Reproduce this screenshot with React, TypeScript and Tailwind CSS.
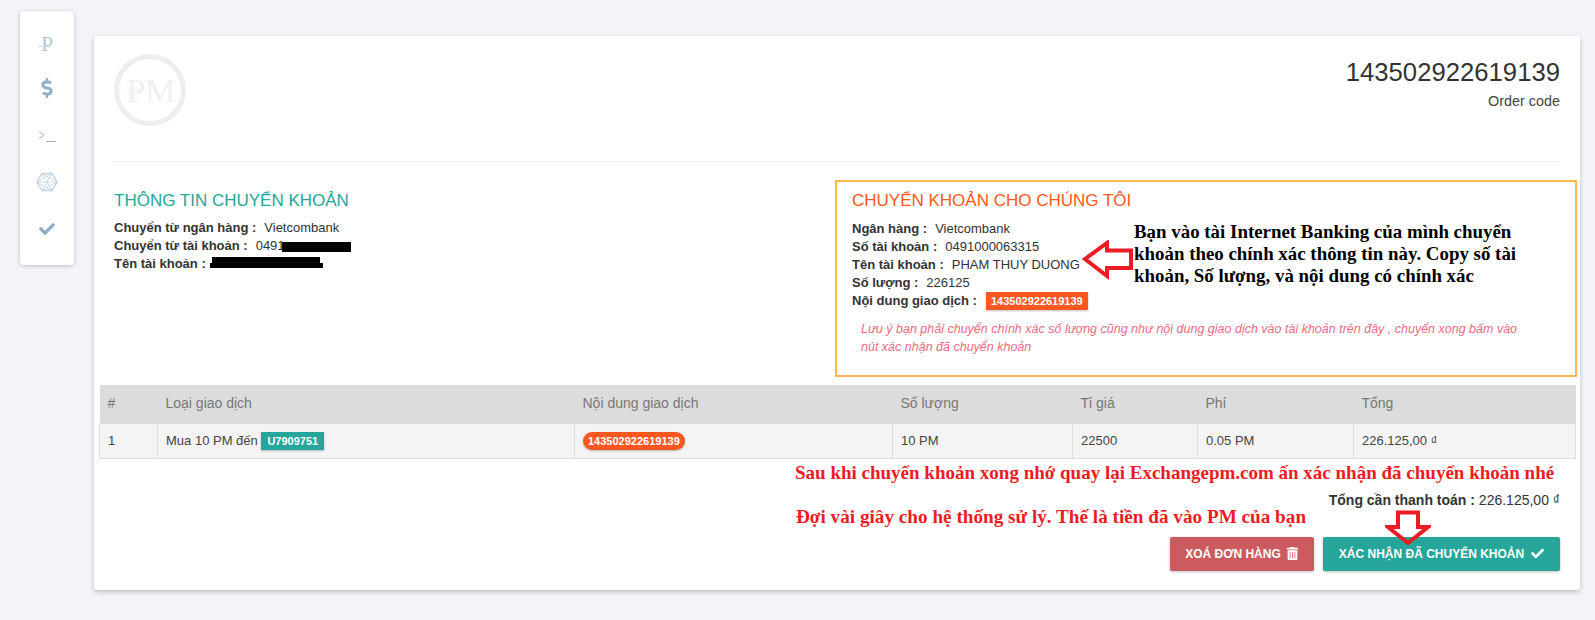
import React from "react";
import { FaCheck, FaDollarSign, FaTrashAlt } from "react-icons/fa";

const sans = { fontFamily: '"Liberation Sans", Arial, sans-serif' };

// table columns: [label, width]
const columns: [string, number][] = [
  ["#", 58],
  ["Loại giao dịch", 417],
  ["Nội dung giao dịch", 318],
  ["Số lượng", 180],
  ["Tỉ giá", 125],
  ["Phí", 156],
  ["Tổng", 222],
];

const Terminal = () => (
  <svg width="18" height="12" viewBox="0 0 18 12" fill="none" stroke="#9db7cb" strokeWidth="1">
    <path d="M1 1.5 L6 5 L1 8.5" />
    <path d="M8 11.5 H18" />
  </svg>
);

const Hexagon = () => (
  <svg width="22" height="20" viewBox="0 0 22 20" fill="none" stroke="#c3d2de" strokeWidth="0.8">
    <path d="M6 1.5 H16 L21 10 L16 18.5 H6 L1 10 Z" strokeWidth="1.4" />
    <path d="M6 1.5 L16 18.5 M16 1.5 L6 18.5 M1 10 H21 M6 1.5 L21 10 M16 1.5 L1 10 M6 18.5 L21 10 M16 18.5 L1 10" />
  </svg>
);

const Sidebar = () => (
  <div className="mt-[11px] flex h-[254px] w-[54px] shrink-0 flex-col items-center rounded-[4px] bg-white pt-[10px] shadow-[0_1px_4px_rgba(0,0,0,0.22)]">
    <div className="relative flex h-[46px] items-center justify-center">
      <span className="text-[22px] leading-none text-[#b4c8d8]" style={{ fontFamily: '"Liberation Serif", serif' }}>
        P
      </span>
      <span className="absolute left-[-3px] top-[25px] h-px w-[14px] bg-[#d5e0e9]" />
    </div>
    <div className="mt-[-2px] flex h-[46px] items-center justify-center">
      <FaDollarSign className="text-[20px] text-[#94b0c6]" />
    </div>
    <div className="mt-[2px] flex h-[46px] items-center justify-center">
      <Terminal />
    </div>
    <div className="flex h-[46px] items-center justify-center">
      <Hexagon />
    </div>
    <div className="mt-[1px] flex h-[46px] items-center justify-center">
      <FaCheck className="text-[16px] text-[#8fabc1]" />
    </div>
  </div>
);

const Logo = () => (
  <svg width="72" height="72" viewBox="0 0 72 72">
    <circle cx="36" cy="36" r="33.5" fill="none" stroke="#eeeeee" strokeWidth="5" />
    <text x="37" y="48" textAnchor="middle" fontSize="34" fill="#f0f0f0" fontFamily="Liberation Serif, serif">
      PM
    </text>
    <path d="M13 36 H28" stroke="#eeeeee" strokeWidth="1" />
  </svg>
);

const Row = ({ label, children }: { label: string; children?: React.ReactNode }) => (
  <div>
    <b className="font-bold">{label} :</b>
    <span className="ml-[8px]">{children}</span>
  </div>
);

export default function App() {
  return (
    <div className="relative flex h-[620px] w-[1595px] overflow-hidden bg-[#f3f4f8] pl-5 text-[#333]" style={sans}>
      <Sidebar />

      <div className="ml-5 mt-9 flex h-[554px] w-[1486px] flex-col rounded-[3px] bg-white px-5 pt-[18px] shadow-[0_2px_5px_rgba(0,0,0,0.22)]">
        <div className="flex h-[108px] justify-between border-b border-[#eeeeee]">
          <Logo />
          <div className="text-right">
            <div className="text-[25.7px] leading-[36px] text-[#333]">143502922619139</div>
            <div className="mt-[2px] text-[14.4px] leading-[18px] text-[#444]">Order code</div>
          </div>
        </div>

        <div className="mt-[18px] flex">
          <div className="flex-1 pt-[9px]">
            <h3 className="text-[17px] leading-[24px] text-[#26a69a]">THÔNG TIN CHUYỂN KHOẢN</h3>
            <div className="mt-[6px] text-[13px] leading-[18px]">
              <Row label="Chuyển từ ngân hàng">Vietcombank</Row>
              <Row label="Chuyển từ tài khoản">0491</Row>
              <Row label="Tên tài khoản" />
            </div>
          </div>

          <div className="mr-[-17px] h-[197px] w-[742px] border-2 border-[#ffb74d] pl-[15px] pt-[7px]">
            <h3 className="text-[17px] leading-[24px] text-[#ff5722]">CHUYỂN KHOẢN CHO CHÚNG TÔI</h3>
            <div className="mt-[7px] text-[13px] leading-[18px]">
              <Row label="Ngân hàng">Vietcombank</Row>
              <Row label="Số tài khoản">0491000063315</Row>
              <Row label="Tên tài khoản">PHAM THUY DUONG</Row>
              <Row label="Số lượng">226125</Row>
              <div>
                <b className="font-bold">Nội dung giao dịch :</b>
                <span className="ml-[9px] inline-block h-[18px] bg-[#ff5722] px-[5px] text-[11px] font-bold leading-[18px] text-white shadow-[0_1px_2px_rgba(0,0,0,0.25)]">
                  143502922619139
                </span>
              </div>
            </div>
            <p className="mt-[10px] w-[674px] pl-[9px] text-[12.5px] italic leading-[18px] text-[#ee6a82]">
              Lưu ý bạn phải chuyển chính xác số lượng cũng như nội dung giao dịch vào tài khoản trên đây , chuyển xong bấm vào nút xác nhận đã chuyển khoản
            </p>
          </div>
        </div>

        <table className="mx-[-15px] mt-2 w-[1476px] table-fixed border-collapse text-[13px]">
          <colgroup>
            {columns.map(([label, width]) => (
              <col key={label} style={{ width }} />
            ))}
          </colgroup>
          <thead>
            <tr className="h-[38px] bg-[#dcdcdc] text-[14px] text-[#777]">
              {columns.map(([label]) => (
                <th key={label} className="px-[8px] text-left font-normal">
                  {label}
                </th>
              ))}
            </tr>
          </thead>
          <tbody>
            <tr className="h-[35px] bg-[#f4f4f4] text-[#444]">
              <td className="border border-[#dddddd] px-[8px]">1</td>
              <td className="border border-[#dddddd] px-[8px]">
                Mua 10 PM đến{" "}
                <span className="inline-block h-[18px] bg-[#26a69a] px-[6px] align-middle text-[11px] font-bold leading-[18px] text-white shadow-[0_1px_2px_rgba(0,0,0,0.25)]">
                  U7909751
                </span>
              </td>
              <td className="border border-[#dddddd] px-[8px]">
                <span className="inline-block h-[18px] rounded-full bg-[#ff5722] px-[5px] align-middle text-[11px] font-bold leading-[18px] text-white shadow-[0_1px_2px_rgba(0,0,0,0.25)]">
                  143502922619139
                </span>
              </td>
              <td className="border border-[#dddddd] px-[8px]">10 PM</td>
              <td className="border border-[#dddddd] px-[8px]">22500</td>
              <td className="border border-[#dddddd] px-[8px]">0.05 PM</td>
              <td className="border border-[#dddddd] px-[8px]">226.125,00 ₫</td>
            </tr>
          </tbody>
        </table>

        <div className="mt-[32px] text-right text-[14px] leading-[18px]">
          <b className="font-bold">Tổng cần thanh toán :</b> 226.125,00 ₫
        </div>

        <div className="mt-[28px] flex justify-end gap-[9px]">
          <button className="flex h-[34px] w-[144px] items-center justify-center gap-[5px] rounded-[2px] bg-[#cc5b5f] text-[12px] font-bold text-white shadow-[0_1px_3px_rgba(0,0,0,0.25)]">
            XOÁ ĐƠN HÀNG <FaTrashAlt className="text-[13px]" />
          </button>
          <button className="flex h-[34px] w-[237px] items-center justify-center gap-[7px] rounded-[2px] bg-[#26a69a] text-[12px] font-bold text-white shadow-[0_1px_3px_rgba(0,0,0,0.25)]">
            XÁC NHẬN ĐÃ CHUYỂN KHOẢN <FaCheck className="text-[13px]" />
          </button>
        </div>
      </div>

      {/* redactions and red notes pasted over the page */}
      <div className="absolute left-[282px] top-[242px] h-[10px] w-[69px] bg-black" />
      <div className="absolute left-[212px] top-[257px] h-[10px] w-[108px] bg-black" />
      <div className="absolute left-[210px] top-[263px] h-[5px] w-[113px] bg-black" />

      <svg className="absolute left-[1082px] top-[240px]" width="52" height="40" viewBox="0 0 52 40" fill="none">
        <path d="M3 19 L25 3 V10.5 H49 V28 H25 V36 Z" stroke="#ed1c24" strokeWidth="4" />
      </svg>
      <svg className="absolute left-[1385px] top-[509px]" width="46" height="38" viewBox="0 0 46 38" fill="none">
        <path d="M13 3.5 H33 V18 H43 L23 34 L3 18 H13 Z" stroke="#ed1c24" strokeWidth="4" />
      </svg>

      <div
        className="absolute left-[1134px] top-[221px] w-[420px] text-[18.9px] font-bold leading-[22px] text-black"
        style={{ fontFamily: '"Liberation Serif", serif' }}
      >
        Bạn vào tài Internet Banking của mình chuyển
        <br />
        khoản theo chính xác thông tin này. Copy số tài
        <br />
        khoản, Số lượng, và nội dung có chính xác
      </div>
      <div
        className="absolute left-[795px] top-[462px] whitespace-nowrap text-[19px] font-bold leading-[22px] text-[#ed1c24]"
        style={{ fontFamily: '"Liberation Serif", serif' }}
      >
        Sau khi chuyển khoản xong nhớ quay lại Exchangepm.com ấn xác nhận đã chuyển khoản nhé
      </div>
      <div
        className="absolute left-[796px] top-[506px] whitespace-nowrap text-[19.2px] font-bold leading-[22px] text-[#ed1c24]"
        style={{ fontFamily: '"Liberation Serif", serif' }}
      >
        Đợi vài giây cho hệ thống sử lý. Thế là tiền đã vào PM của bạn
      </div>
    </div>
  );
}
